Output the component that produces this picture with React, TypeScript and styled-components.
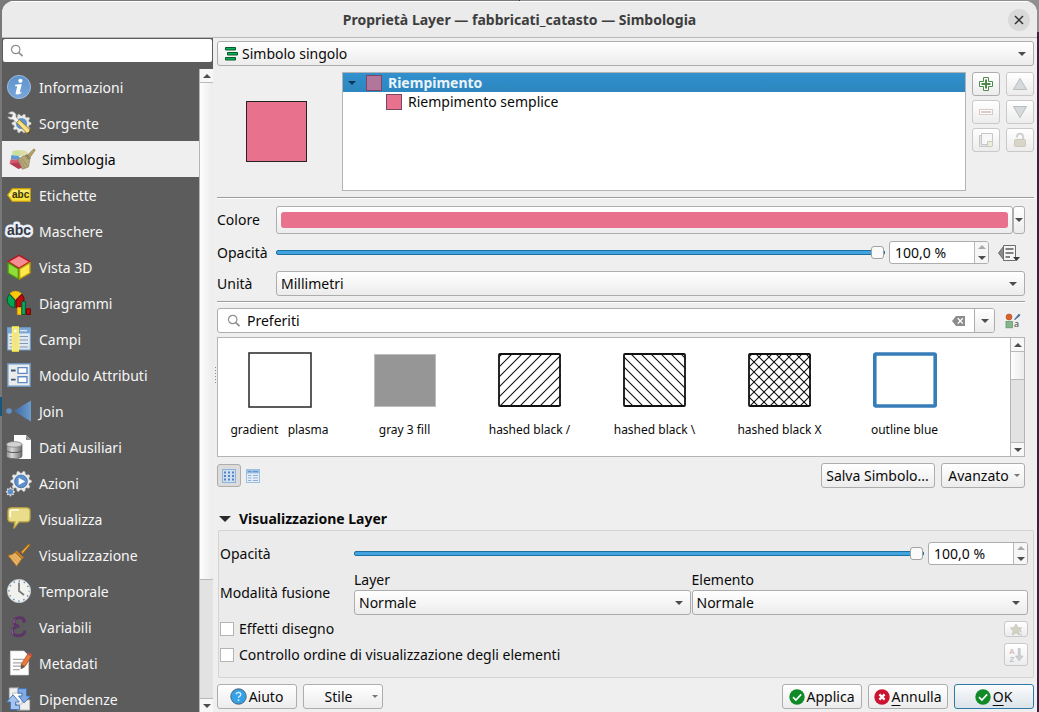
import React, { useState } from "react";
import styled, { createGlobalStyle, css } from "styled-components";

const Global = createGlobalStyle`
  *, *::before, *::after { box-sizing: border-box; }
  body {
    margin: 0;
    background: #efefef;
    color: #0a0a0a;
    font: 14px/18px "Noto Sans", "Open Sans", sans-serif;
  }
  button, input, select { font: inherit; color: inherit; margin: 0; }
  button { cursor: default; }
`;

const raised = css`
  border: 1px solid #adadad;
  border-radius: 3px;
  background: linear-gradient(#ffffff, #ececec);
`;

/* ---------- window frame ---------- */

const Desktop = styled.div`
  height: 100vh;
  padding: 1px 2px 0;
  background:
    linear-gradient(#17577d, #17577d) 0 397px / 2px 19px no-repeat,
    linear-gradient(#8f8f8f, #8f8f8f) right 0 / 50% 32px no-repeat,
    linear-gradient(to right, #787878 50%, #3b2140 50%);
`;

const Window = styled.div`
  display: flex;
  flex-direction: column;
  height: 100%;
  overflow: hidden;
  background: #efefef;
  border-radius: 12px 12px 0 0;
`;

const TitleBar = styled.header`
  display: grid;
  grid-template-columns: 32px 1fr 32px;
  align-items: center;
  flex: none;
  height: 37px;
  border-top: 1px solid #ffffff;
  border-bottom: 1px solid #b9b9b9;
  background: #ebebeb;
`;

const Title = styled.h1`
  grid-column: 2;
  margin: 0;
  font-size: 14px;
  line-height: 20px;
  font-weight: 700;
  text-align: center;
  color: #3d3d3d;
`;

const CloseButton = styled.button`
  display: grid;
  place-items: center;
  justify-self: end;
  width: 22px;
  height: 22px;
  margin-right: 7px;
  padding: 0;
  border: 0;
  border-radius: 50%;
  background: #d9d9d9;
`;

const Body = styled.div`
  display: flex;
  flex: 1;
  min-height: 0;
`;

/* ---------- sidebar ---------- */

const Sidebar = styled.nav`
  display: flex;
  flex-direction: column;
  gap: 7px;
  flex: none;
  width: 211px;
  padding: 1px 1px 0 0;
  background: #5c5c5c;
`;

const SearchBox = styled.label`
  display: flex;
  align-items: center;
  gap: 4px;
  height: 23px;
  margin-left: 1px;
  padding: 0 7px;
  border-radius: 2px;
  background: #ffffff;
`;

const PlainInput = styled.input`
  flex: 1;
  min-width: 0;
  padding: 0;
  border: 0;
  outline: 0;
  background: transparent;
`;

const SidebarScroll = styled.div`
  display: flex;
  flex: 1;
  min-height: 0;
  margin-right: -1px;
`;

const NavList = styled.ul`
  flex: 1;
  margin: 0;
  padding: 0;
  overflow: hidden;
  list-style: none;
`;

const NavItem = styled.button<{ $active: boolean }>`
  display: flex;
  align-items: center;
  gap: 8px;
  width: 100%;
  height: 36px;
  padding: 0 0 0 ${(p) => (p.$active ? 8 : 5)}px;
  border: 0;
  background: ${(p) => (p.$active ? "#efefef" : "transparent")};
  color: ${(p) => (p.$active ? "#000000" : "#f6f6f6")};
  text-align: left;
  white-space: nowrap;
`;

const NavText = styled.span`
  padding-top: 2px;
`;

/* ---------- scroll bar ---------- */

const Track = styled.div<{ $width: number }>`
  display: flex;
  flex-direction: column;
  flex: none;
  width: ${(p) => p.$width}px;
  border-left: 1px solid #b5b5b5;
  background: #e2e2e2;
`;

const TrackButton = styled.button`
  display: grid;
  place-items: center;
  flex: none;
  height: 13px;
  padding: 0;
  border: 0;
  background: #f7f7f7;
`;

const Handle = styled.div<{ $grow: number }>`
  flex: ${(p) => p.$grow} 0 0;
  border: solid #b9b9b9;
  border-width: 1px 0;
  background: linear-gradient(to right, #fdfdfd, #ececec);
`;

const TrackRest = styled.div<{ $grow: number }>`
  flex: ${(p) => p.$grow} 0 0;
  border-bottom: 1px solid #b9b9b9;
`;

const Triangle = ({ up, color = "#4d4d4d", w = 8 }: { up?: boolean; color?: string; w?: number }) => (
  <svg width={w} height={w / 2} viewBox="0 0 8 4" aria-hidden="true">
    <path d={up ? "M0 4L4 0L8 4Z" : "M0 0H8L4 4Z"} fill={color} />
  </svg>
);

function ScrollBar({ width, handle, rest }: { width: number; handle: number; rest: number }) {
  return (
    <Track $width={width}>
      <TrackButton aria-label="Scorri su"><Triangle up /></TrackButton>
      <Handle $grow={handle} />
      <TrackRest $grow={rest} />
      <TrackButton aria-label="Scorri giù"><Triangle /></TrackButton>
    </Track>
  );
}

/* ---------- splitter ---------- */

const Splitter = styled.div`
  display: flex;
  flex-direction: column;
  align-items: center;
  justify-content: center;
  gap: 2px;
  flex: none;
  width: 4px;
`;

const SplitterDot = styled.i`
  width: 1px;
  height: 1px;
  background: #8c8c8c;
`;

/* ---------- main column ---------- */

const Main = styled.main`
  display: flex;
  flex-direction: column;
  justify-content: space-between;
  flex: 1;
  min-width: 0;
  padding: 3px 3px 3px 0;
`;

const Stack = styled.div<{ $gap: number }>`
  display: flex;
  flex-direction: column;
  gap: ${(p) => p.$gap}px;
`;

const Inset = styled(Stack)`
  padding: 7px 9px 0 0;
`;

const Rule = styled.hr`
  width: 100%;
  height: 2px;
  margin: 0;
  border: 0;
  border-top: 1px solid #9c9c9c;
  background: #ffffff;
`;

const ComboFrame = styled.div`
  display: grid;
  grid-template-columns: auto 1fr auto;
  align-items: center;
  height: 25px;
  ${raised}
`;

const ComboSelect = styled.select<{ $indent: number }>`
  grid-area: 1 / 1 / 2 / 4;
  width: 100%;
  height: 23px;
  padding: 0 24px 0 ${(p) => p.$indent}px;
  border: 0;
  outline: 0;
  appearance: none;
  background: transparent;
`;

const ComboIcon = styled.span`
  grid-area: 1 / 1;
  display: flex;
  padding-left: 7px;
  pointer-events: none;
`;

const ComboArrow = styled.span`
  grid-area: 1 / 3;
  display: flex;
  padding-right: 7px;
  pointer-events: none;
`;

function Combo({ id, label, value, icon }: { id: string; label?: string; value: string; icon?: React.ReactNode }) {
  return (
    <ComboFrame>
      {icon && <ComboIcon>{icon}</ComboIcon>}
      <ComboSelect id={id} aria-label={label} $indent={icon ? 24 : 4}>
        <option>{value}</option>
      </ComboSelect>
      <ComboArrow><Triangle /></ComboArrow>
    </ComboFrame>
  );
}

/* ---------- symbol preview and tree ---------- */

const SymbolRow = styled.section`
  display: grid;
  grid-template-columns: 119px 1fr auto;
  gap: 6px;
  height: 119px;
`;

const Preview = styled.div`
  place-self: center;
  width: 61px;
  height: 61px;
  border: 1px solid #232323;
  background: #e8718d;
`;

const Tree = styled.ul`
  margin: 0;
  padding: 0;
  border: 1px solid #b4b4b4;
  background: #ffffff;
  list-style: none;
`;

const TreeRow = styled.li<{ $level: number; $selected?: boolean }>`
  display: flex;
  align-items: center;
  gap: 6px;
  height: 19px;
  padding-left: ${(p) => 5 + p.$level * 38}px;
  background: ${(p) => (p.$selected ? "linear-gradient(#3190cd, #2d86bf)" : "none")};
  color: ${(p) => (p.$selected ? "#e9f3fa" : "inherit")};
  font-weight: ${(p) => (p.$selected ? 700 : 400)};
`;

const Expander = styled.span`
  display: flex;
  width: 12px;
`;

const Swatch = styled.span<{ $color: string }>`
  width: 16px;
  height: 16px;
  border: 1px solid #7d4660;
  background: ${(p) => p.$color};
`;

const ToolGrid = styled.div`
  display: grid;
  grid-template-columns: 28px 28px;
  grid-auto-rows: 24px;
  gap: 4px 6px;
`;

const ToolButton = styled.button<{ $height?: number }>`
  display: grid;
  place-items: center;
  height: ${(p) => p.$height ?? 24}px;
  padding: 0;
  ${raised}
  &:disabled { border-color: #c9c9c9; }
`;

/* ---------- form rows ---------- */

const FormRow = styled.div<{ $label: number }>`
  display: grid;
  grid-template-columns: ${(p) => p.$label}px 1fr;
  align-items: center;
`;

const Line = styled.div<{ $gap: number }>`
  display: flex;
  align-items: center;
  gap: ${(p) => p.$gap}px;
`;

const ColorButton = styled.button`
  flex: 1;
  height: 28px;
  padding: 5px 4px;
  ${raised}
`;

const ColorFill = styled.span`
  display: block;
  height: 16px;
  border-radius: 3px;
  background: #e8718d;
`;

const ColorMenu = styled.button`
  display: grid;
  place-items: center;
  width: 12px;
  height: 28px;
  padding: 0;
  ${raised}
`;

const Slider = styled.input`
  flex: 1;
  min-width: 0;
  height: 14px;
  appearance: none;
  background: transparent;
  &::-webkit-slider-runnable-track {
    height: 5px;
    border: 1px solid #1f6f9f;
    border-radius: 2px;
    background: #41a3e0;
  }
  &::-webkit-slider-thumb {
    width: 13px;
    height: 13px;
    margin-top: -5px;
    appearance: none;
    border: 1px solid #a2a2a2;
    border-radius: 3px;
    background: #fafafa;
  }
`;

const SpinFrame = styled.div`
  display: flex;
  flex: none;
  width: 100px;
  height: 23px;
  overflow: hidden;
  border: 1px solid #adadad;
  border-radius: 3px;
  background: #ffffff;
`;

const SpinInput = styled(PlainInput)`
  padding-left: 5px;
`;

const SpinButtons = styled.div`
  display: grid;
  width: 14px;
  border-left: 1px solid #b9b9b9;
  background: #f6f6f6;
`;

const SpinButton = styled.button`
  display: grid;
  place-items: center;
  padding: 0;
  border: 0;
  background: transparent;
`;

function Spin({ label }: { label: string }) {
  const [value, setValue] = useState("100,0 %");
  return (
    <SpinFrame>
      <SpinInput aria-label={label} value={value} onChange={(e) => setValue(e.target.value)} />
      <SpinButtons>
        <SpinButton aria-label="Aumenta" disabled><Triangle up color="#a9a9a9" /></SpinButton>
        <SpinButton aria-label="Diminuisci"><Triangle /></SpinButton>
      </SpinButtons>
    </SpinFrame>
  );
}

const IconButton = styled.button<{ $width: number }>`
  display: grid;
  place-items: center;
  flex: none;
  width: ${(p) => p.$width}px;
  height: 23px;
  padding: 0;
  border: 0;
  background: transparent;
`;

/* ---------- favourites ---------- */

const FilterBox = styled.div`
  display: flex;
  align-items: center;
  flex: 1;
  gap: 6px;
  height: 25px;
  padding-left: 9px;
  overflow: hidden;
  border: 1px solid #adadad;
  border-radius: 3px;
  background: #ffffff;
`;

const FilterMenu = styled.button`
  display: grid;
  place-items: center;
  width: 20px;
  height: 23px;
  margin-left: 2px;
  padding: 0;
  border: 0;
  border-left: 1px solid #adadad;
  background: linear-gradient(#ffffff, #ececec);
`;

const Gallery = styled.div`
  display: flex;
  height: 120px;
  border: 1px solid #b4b4b4;
  background: #ffffff;
`;

const GalleryItems = styled.ul`
  display: flex;
  flex-wrap: wrap;
  flex: 1;
  margin: 0;
  padding: 0;
  overflow: hidden;
  list-style: none;
`;

const GalleryItem = styled.button`
  display: flex;
  flex-direction: column;
  align-items: center;
  gap: 14px;
  width: 125px;
  height: 118px;
  padding: 14px 2px 0 0;
  border: 0;
  background: transparent;
  font-size: 12px;
  line-height: 16px;
  white-space: pre;
`;

const Spread = styled.div`
  display: flex;
  align-items: center;
  justify-content: space-between;
`;

const GalleryBar = styled(Spread)`
  padding-top: 2px;
`;

const ViewButton = styled.button<{ $on?: boolean }>`
  display: grid;
  place-items: center;
  width: 24px;
  height: 23px;
  padding: 0;
  border: 1px solid ${(p) => (p.$on ? "#adadad" : "transparent")};
  border-radius: 3px;
  background: ${(p) => (p.$on ? "#dcdcdc" : "transparent")};
`;

const PushButton = styled.button<{ $width: number; $primary?: boolean }>`
  display: flex;
  align-items: center;
  justify-content: center;
  gap: 2px;
  width: ${(p) => p.$width}px;
  height: 25px;
  padding: 0 4px 0 3px;
  white-space: nowrap;
  ${raised}
  ${(p) =>
    p.$primary &&
    css`
      border-color: #2e79a8;
      background: linear-gradient(#fbfcfd, #dbe3e9);
    `}
  u { text-underline-offset: 3px; }
`;

const Grow = styled.span`
  flex: 1;
  text-align: center;
`;

/* ---------- layer rendering group ---------- */

const Group = styled.section`
  display: flex;
  flex-direction: column;
`;

const GroupHead = styled.h2`
  display: flex;
  align-items: center;
  gap: 8px;
  margin: 0;
  padding: 0 0 1px 2px;
  font-size: 14px;
  line-height: 20px;
  font-weight: 700;
`;

const GroupBox = styled.div`
  display: flex;
  flex-direction: column;
  gap: 6px;
  margin: 0 0 6px 1px;
  padding: 11px 5px 11px 1px;
  border: 1px solid #d4d4d4;
  border-radius: 2px;
  background: #ebebeb;
`;

const Halves = styled.div`
  display: grid;
  grid-template-columns: 1fr 1fr;
  gap: 1px;
`;

const Field = styled.div`
  display: flex;
  flex-direction: column;
  gap: 1px;
`;

const CheckLabel = styled.label`
  display: flex;
  align-items: center;
  gap: 5px;
  line-height: 16px;
`;

const CheckBox = styled.input`
  width: 14px;
  height: 14px;
  appearance: none;
  border: 1px solid #b4b4b4;
  background: #ffffff;
`;

const SmallTool = styled(ToolButton)`
  width: 24px;
`;

/* ---------- icons ---------- */

const Glass = () => (
  <svg width="14" height="14" viewBox="0 0 14 14" fill="none" stroke="#8e8e8e" aria-hidden="true">
    <circle cx="5.7" cy="5.5" r="4.2" strokeWidth="1.2" />
    <path d="M8.8 8.6L12.6 12.2" strokeWidth="1.6" />
  </svg>
);

const gearPath = (cx: number, cy: number, r: number, teeth: number, depth: number) => {
  const pts: string[] = [];
  for (let i = 0; i < teeth * 4; i++) {
    const a = ((i - 0.5) / (teeth * 4)) * Math.PI * 2;
    const q = i % 4 < 2 ? r : r - depth;
    pts.push(`${(cx + q * Math.cos(a)).toFixed(2)} ${(cy + q * Math.sin(a)).toFixed(2)}`);
  }
  return `M${pts.join("L")}Z`;
};

const tagText = { fontFamily: '"Liberation Sans", sans-serif', fontWeight: 700, textAnchor: "middle" as const };

const drawings: Record<string, React.ReactNode> = {
  info: (
    <>
      <defs>
        <linearGradient id="info" x1="0" y1="0" x2="0" y2="1">
          <stop offset="0" stopColor="#5c92cc" /><stop offset="1" stopColor="#7aa7da" />
        </linearGradient>
      </defs>
      <circle cx="12" cy="12" r="11.6" fill="url(#info)" stroke="#a9c6e8" strokeWidth=".8" />
      <circle cx="13.4" cy="5.8" r="2.1" fill="#fff" />
      <path d="M8.2 9.8L14.8 9L12.8 17Q12.8 17.8 14.6 16.8L14.2 18.2Q9.4 20.8 8.6 18.6Q8.6 18 10.2 11.2L8 11.2Z" fill="#fff" />
    </>
  ),
  source: (
    <>
      <path d={gearPath(14.5, 12.5, 9.6, 10, 2)} fill="#e9e9e6" stroke="#c9c9c5" strokeWidth=".5" />
      <circle cx="14.5" cy="12.5" r="5.6" fill="#5f93cf" />
      <path d="M1 2.4Q4-.8 7.6 1.4Q9.8 3.2 9 6.2L12.4 9.4L9.6 12L6.2 8.6Q3.2 9 1.2 7L.8 5.8L4.6 6.2L5.8 3.6Z" fill="#f4f4f4" stroke="#8d8d8d" strokeWidth=".6" />
      <path d="M9.6 11.4L12.6 8.8L23 18.4L22.8 21L19.6 22.2Z" fill="#f2d978" stroke="#8a6f1c" strokeWidth=".8" />
      <path d="M12 11.4L21 20.6" stroke="#fff1b0" strokeWidth="1" />
      <path d="M20.6 22.4Q23.4 21.8 23.4 19" stroke="#5d5030" strokeWidth="1.2" fill="none" />
    </>
  ),
  symbology: (
    <>
      <path d="M2.4 4L8.6 3L17 6.4L9 9.4L2 7.6Z" fill="#c9df9c" />
      <path d="M8.6 3L15 3.6L19 6.6L12 8Z" fill="#dfdca6" />
      <path d="M1.4 8L8.6 9L11 13L.8 12.6Z" fill="#5f9bd2" />
      <path d="M.6 12.6L9 12.8L12 18L-.4 16.6Z" fill="#d4596b" />
      <path d="M-.6 16.4L8 15.6L13 20.6L8.4 22Z" fill="#b63a51" />
      <path d="M8 12.4L14 8.6L19.6 13.6L18.4 20L12.4 22.2Z" fill="#b5a87b" stroke="#8b7d54" strokeWidth=".7" />
      <path d="M10.4 13.2L14.6 20.6M12.6 11.8L17 19" stroke="#968859" strokeWidth=".8" />
      <path d="M14.4 8.6L19.4 13.2L21 11L17.2 7Z" fill="#948554" />
      <path d="M18 7.8L23.4 2.2Q25 1.6 25 3.4L20.4 9.8Z" fill="#b5a269" stroke="#8a7a47" strokeWidth=".7" />
    </>
  ),
  labels: (
    <>
      <path d="M.6 12L4.8 6.2Q5.2 5.6 6 5.6H23.4V18.4H6Q5.2 18.4 4.8 17.8Z" fill="#f8e13c" stroke="#c49d10" strokeWidth="1.1" />
      <path d="M6 7H22.2V10.4H4Z" fill="#fdf07e" opacity=".8" />
      <circle cx="3.4" cy="12" r="1" fill="#fffbe0" />
      <text x="13.6" y="15" fontSize="10" fill="#38320e" {...tagText}>abc</text>
    </>
  ),
  masks: (
    <>
      <text x="12" y="15.8" fontSize="14" stroke="#e9eef9" strokeWidth="5" strokeLinejoin="round" fill="#e9eef9" {...tagText}>abc</text>
      <text x="12" y="15.8" fontSize="14" fill="#34383f" {...tagText}>abc</text>
    </>
  ),
  cube: (
    <>
      <path d="M12 .4L23 6.6L12 13.4L1 6.6Z" fill="#f58d92" stroke="#b8161f" strokeWidth="1.5" strokeLinejoin="round" />
      <path d="M1 7.6L11.4 14V24L1 18Z" fill="#8fdd3a" stroke="#4e9410" strokeWidth="1.4" strokeLinejoin="round" />
      <path d="M23 7.6L12.6 14V24L23 18Z" fill="#fce94c" stroke="#bd9a08" strokeWidth="1.4" strokeLinejoin="round" />
    </>
  ),
  diagrams: (
    <>
      <path d="M8.5 8.4L3 2.4A8 8 0 0 1 14.4 2.6Z" fill="#fcca0a" stroke="#d1a008" strokeWidth=".6" />
      <path d="M7.8 9L2.2 3.2A8 8 0 0 0 7.8 16.6Z" fill="#00a651" stroke="#00531f" strokeWidth=".9" />
      <path d="M9 9L15 3.2A8 8 0 0 1 9 16.6Z" fill="#b90c0c" stroke="#6d0000" strokeWidth=".9" />
      <path d="M10.4 16.6H14.4V23.5H10.4Z" fill="#fcca0a" stroke="#e89a0c" />
      <path d="M14.8 10.4H18.4V23.5H14.8Z" fill="#12a463" stroke="#04572a" />
      <path d="M19.4 17.8H23.4V23.5H19.4Z" fill="#b90c0c" stroke="#740000" />
    </>
  ),
  fields: (
    <>
      <path d="M.6.8H23.4V23H.6Z" fill="#dfe7f1" stroke="#6f9bcb" strokeWidth="1.2" />
      <path d="M1 1H23V6.4H1Z" fill="#7ba5d4" />
      <path d="M13 3.6H20" stroke="#dce8f5" strokeWidth="1.3" />
      <path d="M2.6 9.5H5M2.6 13H5M2.6 16.5H5M2.6 20H5M12.6 9.5H21M12.6 13H21M12.6 16.5H21M12.6 20H21" stroke="#8198b2" strokeWidth="1.1" />
      <path d="M5.6 0H11.2V24H5.6Z" fill="#efe39a" stroke="#fff04a" strokeWidth="1.6" />
      <circle cx="8.4" cy="4" r="1.3" fill="#fff" />
    </>
  ),
  form: (
    <>
      <path d="M.8.8H23.2V23.2H.8Z" fill="#ececec" stroke="#6d94c0" strokeWidth="1.4" />
      <path d="M11 4.6H20V10.4H11ZM11 13.8H20V19.6H11Z" fill="#fff" stroke="#5d8cc4" strokeWidth="1.4" />
      <path d="M4 7.5H8.6M4 16.7H8.6" stroke="#3c5672" strokeWidth="1.8" />
    </>
  ),
  join: (
    <>
      <defs>
        <linearGradient id="join" x1="0" x2="1"><stop offset="0" stopColor="#3f689c" /><stop offset="1" stopColor="#6c9bd0" /></linearGradient>
      </defs>
      <circle cx="2" cy="12" r="2.8" fill="#6391c6" />
      <path d="M6.6 12L24 1.4V22.6Z" fill="url(#join)" />
    </>
  ),
  auxiliary: (
    <>
      <path d="M7 0H19L24 5V24H7Z" fill="#fdfdfd" />
      <path d="M19 0V5H24Z" fill="#8f8f8f" />
      <defs>
        <linearGradient id="disk" x1="0" x2="1"><stop offset="0" stopColor="#8b8b8b" /><stop offset=".35" stopColor="#d8d8d8" /><stop offset="1" stopColor="#6f6f6f" /></linearGradient>
      </defs>
      <path d="M-.6 9.4V21.4A8 2.8 0 0 0 15 21.4V9.4Z" fill="url(#disk)" stroke="#5a5a5a" strokeWidth=".7" />
      <path d="M-.6 15.4A8 2.8 0 0 0 15 15.4" fill="none" stroke="#555" strokeWidth="1" />
      <ellipse cx="7.2" cy="9.4" rx="7.8" ry="2.8" fill="#d3d3d3" stroke="#777" strokeWidth=".7" />
    </>
  ),
  actions: (
    <>
      <path d={gearPath(14, 10.4, 10.4, 10, 2)} fill="#ececec" stroke="#bdbdbd" strokeWidth=".6" />
      <circle cx="14" cy="10.4" r="6.4" fill="#5c8fcb" stroke="#3d6ea8" strokeWidth=".8" />
      <path d="M11.6 6.8L18.2 10.4L11.6 14Z" fill="#fff" />
      <path d={gearPath(3.4, 20.8, 4.6, 8, 1.2)} fill="#dedede" />
      <circle cx="3.4" cy="20.8" r="2.7" fill="#5c8fcb" />
    </>
  ),
  display: (
    <>
      <path d="M4.6.8H19.6Q23 .8 23 4.2V11.4Q23 14.8 19.6 14.8H12L6.8 21.4L8 14.8H4.6Q1 14.8 1 11.4V4.2Q1 .8 4.6 .8Z" fill="#e9dd8c" stroke="#c2a93f" strokeWidth="1.3" />
      <path d="M3.2 10V5.2Q3.2 3 5.6 3H12" fill="none" stroke="#fffce8" strokeWidth="1.6" />
    </>
  ),
  rendering: (
    <>
      <path d="M13.8 9L21.4 1.2Q23 .4 23.2 2L15.6 11Z" fill="#f0a63a" stroke="#8f5a10" strokeWidth=".9" />
      <path d="M9.6 7.4L16.8 14.4L15.2 16L8 9Z" fill="#c97f1e" />
      <path d="M1 12.4Q5 12 8.2 9.4L14.8 16Q12.4 19.4 9.6 23.2Z" fill="#e9b465" stroke="#a86a18" strokeWidth=".9" />
      <path d="M4 12.6L11 19.8M6.4 11.6L12.6 17.8" stroke="#cf9748" strokeWidth=".7" />
    </>
  ),
  temporal: (
    <>
      <circle cx="12" cy="12" r="11.6" fill="#f1f1ee" stroke="#d1d1d1" strokeWidth=".8" />
      <circle cx="12" cy="12" r="10" fill="none" stroke="#5f8ec4" strokeWidth="1.5" strokeDasharray="1.4 3.84" strokeDashoffset=".7" />
      <path d="M12 3.4V12L17 16" fill="none" stroke="#777" strokeWidth="1.7" />
    </>
  ),
  variables: (
    <>
      <path d="M17.4 6.8Q17.4 2.6 12.6 2.6Q7.2 2.8 7 6.8Q7 10.2 12 11.4Q5.4 12.4 5.4 16.4Q5.6 20.8 11.6 20.8Q17 20.6 18 15.6" fill="none" stroke="#5d3468" strokeWidth="2.9" />
      <circle cx="17" cy="6.2" r="1.7" fill="#5d3468" />
      <path d="M8 4.2Q6.2 6 7 8M5.4 14.4Q4.2 17 6 19" stroke="#9b7aa5" strokeWidth=".9" fill="none" />
    </>
  ),
  metadata: (
    <>
      <path d="M3.4 0H17L21.6 4.6V24H3.4Z" fill="#fdfdfd" stroke="#d9d9d9" strokeWidth=".6" />
      <path d="M6 8.4H17M6 11.8H15M6 15.2H14M6 18.6H12.6" stroke="#a8a8a8" strokeWidth="1.2" />
      <path d="M14.4 13.2L20.8 3L24.4 5.2L18 15.4L14 17.8Z" fill="#ea7a3c" stroke="#a34c1c" strokeWidth=".8" />
      <path d="M20.6 3L21.8 1.6L25 3.8L24.4 5.2Z" fill="#d84d4d" />
      <path d="M14.4 13.2L18 15.4L14 17.8Z" fill="#5a5a5a" />
    </>
  ),
  dependencies: (
    <>
      <path d="M2.4 1H12V12H2.4ZM10 13H22.6V23H10Z" fill="#efefef" stroke="#c0c0c0" />
      <path d="M5.6 6H15V17H5.6Z" fill="#fafafa" stroke="#bdbdbd" />
      <path d="M11 1.6H19.6V9H23.6L17 16L11.6 9H15V6.2H11Z" fill="#7fabe2" stroke="#3e70b4" strokeWidth=".9" />
      <path d="M12.6 22.6H3.4V15H-.4L6 8L12.4 15H8.6V18.2H12.6Z" fill="#a5c4ee" stroke="#3e70b4" strokeWidth=".9" />
    </>
  ),
};

const NavIcon = ({ name }: { name: string }) => (
  <svg width="24" height="24" viewBox="0 0 24 24" overflow="visible" aria-hidden="true">
    {drawings[name]}
  </svg>
);

const SingleSymbolIcon = () => (
  <svg width="14" height="15" viewBox="0 0 14 15" fill="#0bb05a" stroke="#05582a" aria-hidden="true">
    <path d="M.5 1.5H10.5V4H.5ZM2.5 6.5H12.5V9H2.5ZM.5 11.5H10.5V14H.5Z" strokeLinejoin="round" />
  </svg>
);

const Tick = () => (
  <svg width="16" height="16" viewBox="0 0 16 16" aria-hidden="true">
    <circle cx="8" cy="8" r="7.7" fill="#0f8a26" />
    <path d="M4 8.2L6.9 11L12.2 5.4" stroke="#fff" strokeWidth="1.6" fill="none" />
  </svg>
);

const Cross = () => (
  <svg width="16" height="16" viewBox="0 0 16 16" aria-hidden="true">
    <circle cx="8" cy="8" r="7.7" fill="#cb1430" />
    <path d="M5.4 5.4L10.6 10.6M10.6 5.4L5.4 10.6" stroke="#fff" strokeWidth="2.2" />
  </svg>
);

const Question = () => (
  <svg width="17" height="17" viewBox="0 0 17 17" aria-hidden="true">
    <circle cx="8.5" cy="8.5" r="7.7" fill="#35a1e6" stroke="#4a6377" />
    <path d="M6.2 6.4Q6.3 4.4 8.5 4.4Q10.8 4.5 10.8 6.4Q10.8 7.6 9.4 8.3Q8.5 8.8 8.5 10" stroke="#d8eefc" strokeWidth="1.3" fill="none" />
    <circle cx="8.5" cy="12.2" r=".9" fill="#d8eefc" />
  </svg>
);

const diagonals = (forward: boolean) => {
  let d = "";
  for (let x = -50; x < 120; x += 10) d += forward ? `M${x} 56L${x + 56} 0` : `M${x - 4} 0L${x + 52} 56`;
  return d;
};

type Fill = "white" | "gray" | "slash" | "backslash" | "cross" | "blue";

function Thumb({ fill }: { fill: Fill }) {
  const hatched = fill === "slash" || fill === "backslash" || fill === "cross";
  return (
    <svg width="64" height="56" viewBox="0 0 64 56" aria-hidden="true">
      <defs><clipPath id={`clip-${fill}`}><rect x="1" y="2" width="62" height="52" /></clipPath></defs>
      {fill === "white" && <rect x="1" y="1" width="62" height="54" fill="#fff" stroke="#333" strokeWidth="1.6" />}
      {fill === "gray" && <rect x="1.5" y="2.5" width="61" height="52" fill="#969696" stroke="#bdbdbd" />}
      {fill === "blue" && <rect x="1.8" y="2" width="60.4" height="52" rx="1" fill="#fff" stroke="#377eb8" strokeWidth="3.6" />}
      {hatched && (
        <>
          <g clipPath={`url(#clip-${fill})`} stroke="#111" strokeWidth="1.1">
            {fill !== "backslash" && <path d={diagonals(true)} />}
            {fill !== "slash" && <path d={diagonals(false)} />}
          </g>
          <rect x="1" y="2" width="61" height="52" rx="1" fill="none" stroke="#111" strokeWidth="1.8" />
        </>
      )}
    </svg>
  );
}

/* ---------- data ---------- */

const sections: [string, string][] = [
  ["info", "Informazioni"],
  ["source", "Sorgente"],
  ["symbology", "Simbologia"],
  ["labels", "Etichette"],
  ["masks", "Maschere"],
  ["cube", "Vista 3D"],
  ["diagrams", "Diagrammi"],
  ["fields", "Campi"],
  ["form", "Modulo Attributi"],
  ["join", "Join"],
  ["auxiliary", "Dati Ausiliari"],
  ["actions", "Azioni"],
  ["display", "Visualizza"],
  ["rendering", "Visualizzazione"],
  ["temporal", "Temporale"],
  ["variables", "Variabili"],
  ["metadata", "Metadati"],
  ["dependencies", "Dipendenze"],
];

const favourites: [Fill, string][] = [
  ["white", "gradient   plasma"],
  ["gray", "gray 3 fill"],
  ["slash", "hashed black /"],
  ["backslash", "hashed black \\"],
  ["cross", "hashed black X"],
  ["blue", "outline blue"],
];

/* ---------- parts ---------- */

function SymbolTools() {
  return (
    <ToolGrid>
      <ToolButton aria-label="Aggiungi">
        <svg width="16" height="16" viewBox="0 0 16 16">
          <path d="M5.5 1.5H10.5V5.5H14.5V10.5H10.5V14.5H5.5V10.5H1.5V5.5H5.5Z" fill="#fff" stroke="#4c8a4c" />
          <path d="M8 3.5V12.5M3.5 8H12.5" stroke="#4c8a4c" strokeWidth="2" />
        </svg>
      </ToolButton>
      <ToolButton aria-label="Sposta su" disabled>
        <svg width="16" height="14" viewBox="0 0 16 14"><path d="M8 1.4L14.6 12.5H1.4Z" fill="#d5d9dc" stroke="#b8bdc0" /></svg>
      </ToolButton>
      <ToolButton aria-label="Rimuovi" disabled>
        <svg width="16" height="8" viewBox="0 0 16 8">
          <rect x="1.5" y="1.5" width="13" height="5" fill="#fff" stroke="#dcc8c8" />
          <path d="M3 4H13" stroke="#dccaca" strokeWidth="2" />
        </svg>
      </ToolButton>
      <ToolButton aria-label="Sposta giù" disabled>
        <svg width="16" height="14" viewBox="0 0 16 14"><path d="M8 12.6L14.6 1.5H1.4Z" fill="#d5d9dc" stroke="#b8bdc0" /></svg>
      </ToolButton>
      <ToolButton aria-label="Duplica" disabled>
        <svg width="16" height="16" viewBox="0 0 16 16">
          <path d="M1.5 3.5H12V14.5H1.5Z" fill="#e3e3e3" stroke="#c6c6c6" />
          <path d="M3.5 1.5H14.5V12.5H3.5Z" fill="#f7f7f7" stroke="#c6c6c6" />
          <path d="M9.5 9.5H14.5V14L12 15L9.5 14Z" fill="#ecebdc" stroke="#cccbb8" />
        </svg>
      </ToolButton>
      <ToolButton aria-label="Blocca" disabled>
        <svg width="16" height="16" viewBox="0 0 16 16">
          <path d="M5 5.4V4Q5.4 1.6 8 1.6Q11 1.8 11 4.6V7.6" fill="none" stroke="#cfcfcf" strokeWidth="1.8" />
          <rect x="2.5" y="7.5" width="11" height="7" rx="1" fill="#d8d6c8" stroke="#cac8b8" />
        </svg>
      </ToolButton>
    </ToolGrid>
  );
}

function Symbology() {
  return (
    <Main>
      <div>
        <Stack $gap={6}>
          <Combo id="renderer" label="Tipo di simbologia" value="Simbolo singolo" icon={<SingleSymbolIcon />} />
          <SymbolRow>
            <Preview />
            <Tree>
              <TreeRow $level={0} $selected>
                <Expander><Triangle color="#0d3650" /></Expander>
                <Swatch $color="#b0769c" />
                Riempimento
              </TreeRow>
              <TreeRow $level={1}>
                <Swatch $color="#e8718d" />
                Riempimento semplice
              </TreeRow>
            </Tree>
            <SymbolTools />
          </SymbolRow>
          <Rule />
        </Stack>

        <Inset $gap={5}>
          <Stack $gap={7}>
            <FormRow $label={59}>
              <label htmlFor="color">Colore</label>
              <Line $gap={0}>
                <ColorButton id="color"><ColorFill /></ColorButton>
                <ColorMenu aria-label="Opzioni colore"><Triangle /></ColorMenu>
              </Line>
            </FormRow>
            <FormRow $label={59}>
              <label htmlFor="opacity">Opacità</label>
              <Line $gap={4}>
                <Slider id="opacity" type="range" min={0} max={100} defaultValue={100} />
                <Spin label="Opacità simbolo" />
                <IconButton $width={32} aria-label="Sovrascrittura definita dai dati">
                  <svg width="24" height="18" viewBox="0 0 24 18">
                    <path d="M6.5 2.5L1.5 9L6.5 15.5Z" fill="#8b8b8b" stroke="#6f6f6f" />
                    <path d="M6.5 1.5H18.5V16.5H6.5Z" fill="#f5f5f5" stroke="#6c6c6c" />
                    <path d="M8.5 5H16.5M8.5 9H16.5M8.5 13H13" stroke="#5c5c5c" strokeWidth="1.4" />
                    <path d="M16 13H23L19.5 17Z" fill="#3c3c3c" />
                  </svg>
                </IconButton>
              </Line>
            </FormRow>
            <FormRow $label={59}>
              <label htmlFor="unit">Unità</label>
              <Combo id="unit" value="Millimetri" />
            </FormRow>
          </Stack>
          <Rule />
          <Stack $gap={4}>
            <Line $gap={6}>
              <FilterBox>
                <Glass />
                <PlainInput aria-label="Filtra simboli" defaultValue="Preferiti" />
                <svg width="14" height="10" viewBox="0 0 14 10" role="img" aria-label="Cancella">
                  <path d="M4 0H13V10H4L0 5Z" fill="#8c8c8c" />
                  <path d="M5.8 2.2L10.8 7.6M10.8 2.2L5.8 7.6" stroke="#fff" strokeWidth="1.3" />
                </svg>
                <FilterMenu aria-label="Gruppi di simboli"><Triangle /></FilterMenu>
              </FilterBox>
              <IconButton $width={24} aria-label="Gestore stile">
                <svg width="16" height="16" viewBox="0 0 16 16" overflow="visible">
                  <circle cx="4" cy="4" r="3" fill="#d9622b" stroke="#b04a1c" strokeWidth=".6" />
                  <path d="M9 6.6L13.6 1L15.4 1.4L14.8 3L10 7Z" fill="#4a6c9c" />
                  <rect x="1" y="8.4" width="6.4" height="6.4" fill="#84b58c" stroke="#639a6c" strokeWidth=".8" />
                  <text x="11.6" y="14" fontSize="9" fill="#444" textAnchor="middle">a</text>
                </svg>
              </IconButton>
            </Line>
            <Gallery>
              <GalleryItems>
                {favourites.map(([fill, name]) => (
                  <li key={name}>
                    <GalleryItem>
                      <Thumb fill={fill} />
                      {name}
                    </GalleryItem>
                  </li>
                ))}
              </GalleryItems>
              <ScrollBar width={14} handle={28} rest={64} />
            </Gallery>
            <GalleryBar>
              <Line $gap={0}>
                <ViewButton $on aria-label="Vista a icone">
                  <svg width="14" height="14" viewBox="0 0 14 14">
                    <rect x=".5" y=".5" width="13" height="13" fill="#cfdff2" stroke="#8fb3dc" />
                    <path d="M2 3.5H12M2 7H12M2 10.5H12" stroke="#5483bd" strokeWidth="2" strokeDasharray="2 2" />
                  </svg>
                </ViewButton>
                <ViewButton aria-label="Vista a elenco">
                  <svg width="14" height="14" viewBox="0 0 14 14">
                    <rect x=".5" y=".5" width="13" height="13" fill="#e6eef7" stroke="#9dbfe2" />
                    <path d="M1 1H13V4.5H1Z" fill="#9cc0e6" />
                    <path d="M2 2.7H5.5M7 2.7H12" stroke="#5f8cc0" />
                    <path d="M2 6.5H5.5M7 6.5H12M2 9H5.5M7 9H12M2 11.5H5.5M7 11.5H12" stroke="#8fb0d3" />
                  </svg>
                </ViewButton>
              </Line>
              <Line $gap={6}>
                <PushButton $width={114}>Salva Simbolo...</PushButton>
                <PushButton $width={84}><Grow>Avanzato</Grow><Triangle w={6} color="#777" /></PushButton>
              </Line>
            </GalleryBar>
          </Stack>
        </Inset>
      </div>

      <Group>
        <GroupHead><Triangle w={12} color="#2b2b2b" />Visualizzazione Layer</GroupHead>
        <GroupBox>
          <FormRow $label={134}>
            <label htmlFor="layer-opacity">Opacità</label>
            <Line $gap={4}>
              <Slider id="layer-opacity" type="range" min={0} max={100} defaultValue={100} />
              <Spin label="Opacità layer" />
            </Line>
          </FormRow>
          <FormRow $label={134}>
            <span>Modalità fusione</span>
            <Halves>
              <Field>
                <label htmlFor="blend-layer">Layer</label>
                <Combo id="blend-layer" value="Normale" />
              </Field>
              <Field>
                <label htmlFor="blend-feature">Elemento</label>
                <Combo id="blend-feature" value="Normale" />
              </Field>
            </Halves>
          </FormRow>
          <Spread>
            <CheckLabel><CheckBox type="checkbox" />Effetti disegno</CheckLabel>
            <SmallTool $height={16} aria-label="Personalizza effetti" disabled>
              <svg width="14" height="13" viewBox="0 0 14 13">
                <path d="M7 .8L8.8 4.6L12.8 5L9.8 7.8L10.6 12L7 9.8L3.4 12L4.2 7.8L1.2 5L5.2 4.6Z" fill="#d3d1c2" stroke="#c2c1b4" strokeWidth=".7" />
                <path d="M11 7L12.4 9.4M12 11L12.2 12.6" stroke="#b9b9b9" />
              </svg>
            </SmallTool>
          </Spread>
          <Spread>
            <CheckLabel><CheckBox type="checkbox" />Controllo ordine di visualizzazione degli elementi</CheckLabel>
            <SmallTool $height={23} aria-label="Definisci ordine" disabled>
              <svg width="16" height="16" viewBox="0 0 16 16">
                <text x="4" y="7" fontSize="8" fill="#d5bcc2" {...tagText}>A</text>
                <text x="4" y="14.6" fontSize="8" fill="#b9c2cd" {...tagText}>Z</text>
                <path d="M10.2 1.5H12.2V9H15L11.2 14L7.4 9H10.2Z" fill="#cdd0d3" stroke="#b9bdc1" strokeWidth=".6" />
              </svg>
            </SmallTool>
          </Spread>
        </GroupBox>
        <Spread>
          <Line $gap={6}>
            <PushButton $width={80}><Question />Aiuto</PushButton>
            <PushButton $width={80}><Grow>Stile</Grow><Triangle w={6} color="#777" /></PushButton>
          </Line>
          <Line $gap={6}>
            <PushButton $width={80}><Tick />Applica</PushButton>
            <PushButton $width={80}><Cross /><span><u>A</u>nnulla</span></PushButton>
            <PushButton $width={80} $primary><Tick /><span><u>O</u>K</span></PushButton>
          </Line>
        </Spread>
      </Group>
    </Main>
  );
}

export default function App() {
  const [active, setActive] = useState("symbology");
  return (
    <>
      <Global />
      <Desktop>
        <Window>
          <TitleBar>
            <Title>Proprietà Layer — fabbricati_catasto — Simbologia</Title>
            <CloseButton aria-label="Chiudi">
              <svg width="10" height="10" viewBox="0 0 10 10"><path d="M1 1L9 9M9 1L1 9" stroke="#333" strokeWidth="1.5" /></svg>
            </CloseButton>
          </TitleBar>
          <Body>
            <Sidebar>
              <SearchBox>
                <Glass />
                <PlainInput aria-label="Cerca" />
              </SearchBox>
              <SidebarScroll>
                <NavList>
                  {sections.map(([icon, name]) => (
                    <li key={icon}>
                      <NavItem $active={icon === active} onClick={() => setActive(icon)}>
                        <NavIcon name={icon} />
                        <NavText>{name}</NavText>
                      </NavItem>
                    </li>
                  ))}
                </NavList>
                <ScrollBar width={14} handle={498} rest={119} />
              </SidebarScroll>
            </Sidebar>
            <Splitter>
              {[0, 1, 2, 3, 4, 5].map((n) => <SplitterDot key={n} />)}
            </Splitter>
            <Symbology />
          </Body>
        </Window>
      </Desktop>
    </>
  );
}
